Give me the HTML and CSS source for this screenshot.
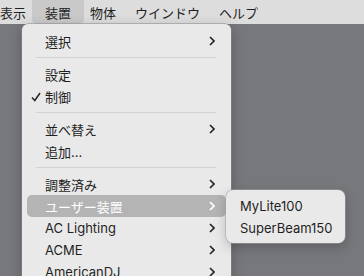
FILE: index.html
```html
<!DOCTYPE html>
<html lang="ja">
<head>
  <meta charset="UTF-8" />
  <title>装置メニュー</title>
  <link rel="stylesheet" href="styles.css">
</head>
<body>
  <div class="menubar">
    <span class="bar-item first">表示</span>
    <span class="bar-item active">装置</span>
    <span class="bar-item">物体</span>
    <span class="bar-item">ウインドウ</span>
    <span class="bar-item">ヘルプ</span>
  </div>

  <div class="desktop">
    <div class="menu main-menu">
      <div class="row">選択<svg class="chev" viewBox="0 0 6 10"><path d="M1 1l4 4-4 4"/></svg></div>
      <div class="sep"></div>
      <div class="row">設定</div>
      <div class="row"><svg class="check" viewBox="0 0 10 10"><path d="M1 5.5l2.8 3L9 1"/></svg>制御</div>
      <div class="sep"></div>
      <div class="row">並べ替え<svg class="chev" viewBox="0 0 6 10"><path d="M1 1l4 4-4 4"/></svg></div>
      <div class="row">追加...</div>
      <div class="sep"></div>
      <div class="row">調整済み<svg class="chev" viewBox="0 0 6 10"><path d="M1 1l4 4-4 4"/></svg></div>
      <div class="row selected">ユーザー装置<svg class="chev" viewBox="0 0 6 10"><path d="M1 1l4 4-4 4"/></svg></div>
      <div class="row">AC Lighting<svg class="chev" viewBox="0 0 6 10"><path d="M1 1l4 4-4 4"/></svg></div>
      <div class="row">ACME<svg class="chev" viewBox="0 0 6 10"><path d="M1 1l4 4-4 4"/></svg></div>
      <div class="row">AmericanDJ<svg class="chev" viewBox="0 0 6 10"><path d="M1 1l4 4-4 4"/></svg></div>
    </div>

    <div class="menu sub-menu">
      <div class="row">MyLite100</div>
      <div class="row">SuperBeam150</div>
    </div>
  </div>
</body>
</html>
```

FILE: styles.css
```css
body {
  margin: 0;
  width: 364px;
  height: 276px;
  overflow: hidden;
  background: #77787c;
  font-family: Inter, "Noto Sans CJK JP", sans-serif;
  font-size: 13px;
  color: #1f1f1f;
}

.menubar {
  display: flex;
  align-items: stretch;
  height: 24px;
  background: #dddddd;
}

.bar-item {
  display: flex;
  align-items: center;
  padding: 0 9.5px;
  border-radius: 0 0 5px 5px;
}

.bar-item.first {
  margin-left: -9.5px;
}

.bar-item.active {
  background: #c9c9c9;
  padding: 0 13px;
  margin: 0 -3.5px;
}

.desktop {
  position: relative;
  height: 252px;
}

.menu {
  position: absolute;
  background: #e9e9e9;
  box-sizing: border-box;
}

.main-menu {
  left: 22px;
  top: 0;
  width: 209px;
  height: 280px;
  padding: 6px 5px;
  border-radius: 6px 6px 0 0;
  box-shadow: 0 0 0 0.5px #8a8a8d, 0 4px 14px rgba(0, 0, 0, 0.25);
}

.row {
  position: relative;
  display: flex;
  align-items: center;
  height: 22px;
  padding: 0 11px 0 18px;
  border-radius: 5px;
}

.row.selected {
  background: #b4b4b4;
  color: #ffffff;
}

.sep {
  height: 11px;
  display: flex;
  align-items: center;
  padding: 0 10px 0 9px;
}

.sep::before {
  content: "";
  flex: 1;
  height: 1px;
  background: #d2d2d2;
}

.chev {
  width: 6px;
  height: 10px;
  margin-left: auto;
  fill: none;
  stroke: #262626;
  stroke-width: 1.7;
}

.selected .chev {
  stroke: #ffffff;
}

.check {
  position: absolute;
  left: 4px;
  top: 7px;
  width: 10px;
  height: 10px;
  fill: none;
  stroke: #262626;
  stroke-width: 1.5;
}

.sub-menu {
  left: 226px;
  top: 166px;
  width: 119px;
  padding: 5px 0 4px;
  border-radius: 7px;
  box-shadow: 0 0 0 0.5px #a5a5a8, 0 4px 12px rgba(0, 0, 0, 0.22);
}

.sub-menu .row {
  padding: 0 0 0 14px;
}
```
